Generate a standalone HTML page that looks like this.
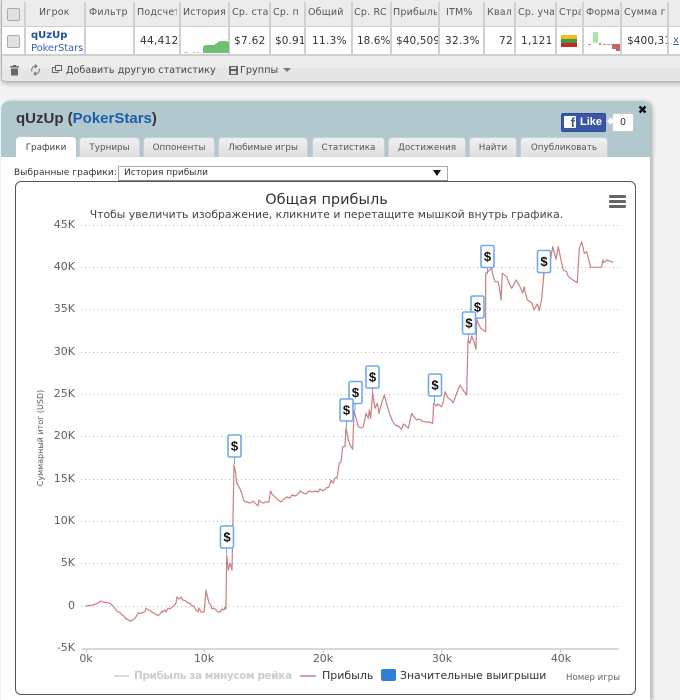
<!DOCTYPE html>
<html><head><meta charset="utf-8">
<style>
html,body{margin:0;padding:0;height:700px;overflow:hidden}
body{width:680px;position:relative;background:#f2f2f2;font-family:"DejaVu Sans",sans-serif;color:#333}
.a{position:absolute;white-space:nowrap}
.top{position:absolute;left:1px;top:0;width:690px;height:81px;background:#ececec;border:1px solid #b5b5b5;border-top:0;border-radius:0 0 5px 5px;box-shadow:0 2px 4px #bbb}
.c{position:absolute;top:2px;height:52px;border-right:2px solid #d0d0d0;box-sizing:border-box}
.h{position:absolute;top:7px;font-size:9.5px;color:#555;overflow:hidden;white-space:nowrap;letter-spacing:.2px}
.v{position:absolute;top:35px;font-size:10.5px;color:#333;overflow:hidden;white-space:nowrap;letter-spacing:.3px}
.cb{position:absolute;width:11px;height:11px;background:#e2e2e2;border:1px solid #aaa;border-radius:2px}
.panel{position:absolute;left:1px;top:101px;width:649px;height:599px;background:#fff;border-radius:8px 8px 0 0;box-shadow:3px 0 3px #bbb}
.phead{position:absolute;left:0;top:0;width:649px;height:56px;background:#b2c8cf;border-radius:8px 8px 0 0}
.tab{position:absolute;top:137px;height:20px;box-sizing:border-box;background:linear-gradient(#f0f0f0,#dedede);border:1px solid #c4d0d4;border-bottom:0;border-radius:4px 4px 0 0;font-size:8.8px;color:#555;text-align:center;line-height:20px}
.chart{position:absolute;left:15px;top:181px;width:621px;height:514px;box-sizing:border-box;background:#fff;border:1px solid #555;border-radius:6px}
.y{position:absolute;width:40px;left:35px;text-align:right;font-size:11px;color:#606060;line-height:12px}
.x{position:absolute;width:40px;text-align:center;font-size:11px;color:#606060;top:652px;line-height:13px}
</style></head><body>

<div class="top"></div>
<div class="a" style="left:2px;top:27px;width:680px;height:27px;background:#fff"></div>
<div class="a" style="left:2px;top:26px;width:680px;height:1px;background:#cfcfcf"></div>
<div class="a" style="left:2px;top:54px;width:680px;height:2px;background:#cfcfcf"></div>
<div class="a" style="left:2px;top:68px;width:680px;height:12px;background:#e6e6e6"></div>
<div class="c" style="left:24px;width:2px"></div>
<div class="c" style="left:84px;width:2px"></div>
<div class="c" style="left:133px;width:2px"></div>
<div class="c" style="left:179px;width:2px"></div>
<div class="c" style="left:228px;width:2px"></div>
<div class="c" style="left:269px;width:2px"></div>
<div class="c" style="left:304px;width:2px"></div>
<div class="c" style="left:351px;width:2px"></div>
<div class="c" style="left:390px;width:2px"></div>
<div class="c" style="left:438px;width:2px"></div>
<div class="c" style="left:483px;width:2px"></div>
<div class="c" style="left:514px;width:2px"></div>
<div class="c" style="left:555px;width:2px"></div>
<div class="c" style="left:582px;width:2px"></div>
<div class="c" style="left:620px;width:2px"></div>
<div class="c" style="left:667px;width:2px"></div>

<div class="cb" style="left:7px;top:8px"></div>
<div class="cb" style="left:7px;top:35px"></div>

<div class="h" style="left:39px;width:45px">Игрок</div>
<div class="h" style="left:89px;width:44px">Фильтр</div>
<div class="h" style="left:137px;width:40px">Подсчет</div>
<div class="h" style="left:183px;width:45px">История</div>
<div class="h" style="left:232px;width:36px">Ср. ста</div>
<div class="h" style="left:273px;width:30px">Ср. п</div>
<div class="h" style="left:308px;width:42px">Общий</div>
<div class="h" style="left:354px;width:36px">Ср. RC</div>
<div class="h" style="left:393px;width:44px">Прибыль</div>
<div class="h" style="left:446px;width:36px">ITM%</div>
<div class="h" style="left:487px;width:27px">Квал</div>
<div class="h" style="left:518px;width:36px">Ср. уча</div>
<div class="h" style="left:559px;width:22px">Стра</div>
<div class="h" style="left:586px;width:33px">Форма</div>
<div class="h" style="left:624px;width:42px">Сумма г</div>

<div class="a" style="left:31px;top:29px;font-size:10px;font-weight:bold;color:#1c4f9c;line-height:13px">qUzUp</div>
<div class="a" style="left:31px;top:42px;font-size:10px;color:#3a5fb0;line-height:13px;width:53px;overflow:hidden;letter-spacing:-.1px">PokerStars</div>
<div class="v" style="left:140px;width:38px;text-align:right">44,412</div>
<svg class="a" style="left:184px;top:40px" width="45" height="14"><path d="M0 12h4v1H0zM9 12h2v1H9zM12 12h3v1h-3zM19 12h1v1h-1z" fill="#a8dba8"/><path d="M19 13V7L21 5H30L36 1H41L45 2V13Z" fill="#6fc073"/></svg>
<div class="v" style="left:234px;width:34px">$7.62</div>
<div class="v" style="left:275px;width:29px;letter-spacing:.1px">$0.91</div>
<div class="v" style="left:312px;width:39px">11.3%</div>
<div class="v" style="left:357px;width:33px;letter-spacing:0">18.6%</div>
<div class="v" style="left:396px;width:42px;letter-spacing:.1px">$40,509</div>
<div class="v" style="left:445px;width:38px">32.3%</div>
<div class="v" style="left:486px;width:27px;text-align:right">72</div>
<div class="v" style="left:521px;width:33px">1,121</div>
<svg class="a" style="left:561px;top:35px" width="16" height="12"><rect width="16" height="4" y="0" fill="#e8c020"/><rect width="16" height="4" y="4" fill="#3f9a40"/><rect width="16" height="4" y="8" fill="#c8282a"/></svg>
<svg class="a" style="left:588px;top:30px" width="33" height="24"><rect x="5" y="2" width="5" height="11" fill="#a4e8a4"/><rect x="0" y="14" width="3" height="1" fill="#c88"/><rect x="11" y="13" width="2" height="2" fill="#c88"/><rect x="15" y="14" width="3" height="1" fill="#c88"/><rect x="19" y="14" width="3" height="1" fill="#c88"/><rect x="23" y="14" width="3" height="1" fill="#c88"/><rect x="24" y="14" width="4" height="5" fill="#c66"/><rect x="28" y="14" width="4" height="7" fill="#b66"/></svg>
<div class="v" style="left:627px;width:40px;letter-spacing:.1px">$400,31</div>
<div class="a" style="left:673px;top:35px;font-size:10px;color:#3a5fb0;text-decoration:underline">x</div>

<svg class="a" style="left:9px;top:64px" width="11" height="12"><path d="M1 2H10V3.500H1ZM4 1H7V2H4ZM2 4.500H9V11.500H2Z" fill="#666"/></svg>
<svg class="a" style="left:30px;top:64px" width="11" height="12" fill="none" stroke="#777" stroke-width="1"><path d="M2 7.500A3.800 3.800 0 0 1 6 2.200M9 4.500A3.800 3.800 0 0 1 5 9.800"/><path d="M5 .5L7 2.200 5 4M6 8L4 9.800 6 11.500" fill="#777"/></svg>
<svg class="a" style="left:52px;top:65px" width="10" height="10" fill="none" stroke="#666" stroke-width="1"><rect x="3.500" y=".5" width="6" height="5"/><path d="M3 2.500H.5V7.500H6V6"/></svg>
<div class="a" style="left:66px;top:64px;font-size:9.5px;color:#444;line-height:14px;letter-spacing:.1px">Добавить другую статистику</div>
<svg class="a" style="left:229px;top:66px" width="10" height="10"><path d="M0 0H9V9H0Z" fill="#666"/><rect x="2" y="1" width="5" height="2" fill="#ddd"/><rect x="2" y="5" width="5" height="3" fill="#ddd"/></svg>
<div class="a" style="left:240px;top:64px;font-size:9.7px;color:#444;line-height:14px">Группы</div>
<div class="a" style="left:283px;top:68px;width:0;height:0;border:4px solid transparent;border-top:4px solid #777;border-bottom:0"></div>

<div class="panel"><div class="phead"></div></div>
<div class="a" style="left:16px;top:110px;font:bold 15px/18px 'Liberation Sans',sans-serif;color:#333">qUzUp (<span style="color:#1c5ea8">PokerStars</span>)</div>

<div class="a" style="left:561px;top:113px;width:45px;height:19px;background:#3b57a3;border-radius:2px;box-sizing:border-box;border:1px solid #2e4a96"></div>
<div class="a" style="left:564px;top:116px;width:12px;height:12px;background:#fff;border-radius:1px;font:bold 13px/14px 'Liberation Sans',sans-serif;color:#3b57a3;text-align:right;overflow:hidden;padding-right:1px;box-sizing:border-box">f</div>
<div class="a" style="left:580px;top:115px;font:bold 11px/14px 'Liberation Sans',sans-serif;color:#fff">Like</div>
<div class="a" style="left:612px;top:113px;width:22px;height:19px;background:#fff;border:1px solid #c4c8d0;box-sizing:border-box;border-radius:2px;font-size:9.5px;line-height:17px;text-align:center;color:#333">0</div>
<div class="a" style="left:607px;top:118px;width:6px;height:6px;background:#fff;transform:rotate(45deg);border-left:1px solid #c4c8d0;border-bottom:1px solid #c4c8d0;box-sizing:border-box"></div>
<svg class="a" style="left:638px;top:105px" width="9" height="9"><path d="M1.500 1.500L7.500 7.500M7.500 1.500L1.500 7.500" stroke="#111" stroke-width="2.400"/></svg>

<div class="tab" style="left:16px;width:60px;background:#fff;color:#444;border-color:#fff">Графики</div>
<div class="tab" style="left:79px;width:61px">Турниры</div>
<div class="tab" style="left:143px;width:72px">Оппоненты</div>
<div class="tab" style="left:218px;width:90px">Любимые игры</div>
<div class="tab" style="left:312px;width:73px">Статистика</div>
<div class="tab" style="left:388px;width:78px">Достижения</div>
<div class="tab" style="left:469px;width:48px">Найти</div>
<div class="tab" style="left:520px;width:88px">Опубликовать</div>

<div class="a" style="left:14px;top:167px;font-size:9px;line-height:13px;color:#333;letter-spacing:.1px">Выбранные графики:</div>
<div class="a" style="left:118px;top:166px;width:330px;height:15px;box-sizing:border-box;border:1px solid #aaa;border-bottom-color:#888;background:#fff;font-size:9px;line-height:13px;color:#333;padding-left:5px">История прибыли</div>
<div class="a" style="left:433px;top:170px;width:0;height:0;border:4px solid transparent;border-top:6px solid #111;border-bottom:0"></div>

<div class="chart"></div>
<div class="a" style="left:16px;width:621px;top:191px;text-align:center;font-size:14.5px;line-height:18px;color:#333">Общая прибыль</div>
<div class="a" style="left:16px;width:621px;top:208px;text-align:center;font-size:10.85px;line-height:14px;color:#444">Чтобы увеличить изображение, кликните и перетащите мышкой внутрь графика.</div>
<div class="a" style="left:609px;top:195px;width:17px;height:3px;background:#666;border-radius:1px"></div>
<div class="a" style="left:609px;top:200px;width:17px;height:3px;background:#666;border-radius:1px"></div>
<div class="a" style="left:609px;top:205px;width:17px;height:3px;background:#666;border-radius:1px"></div>

<div class="y" style="top:219px">45K</div>
<div class="y" style="top:261px">40K</div>
<div class="y" style="top:303px">35K</div>
<div class="y" style="top:346px">30K</div>
<div class="y" style="top:388px">25K</div>
<div class="y" style="top:430px">20K</div>
<div class="y" style="top:473px">15K</div>
<div class="y" style="top:515px">10K</div>
<div class="y" style="top:557px">5K</div>
<div class="y" style="top:600px">0</div>
<div class="y" style="top:642px">-5K</div>
<div class="a" style="left:-19px;top:432px;width:120px;text-align:center;font-size:8px;line-height:12px;color:#555;transform:rotate(-90deg)">Суммарный итог (USD)</div>

<svg class="a" style="left:0;top:0" width="680" height="700">
<g stroke="#bbb" stroke-width="1" stroke-dasharray="1 3" fill="none">
<path d="M81 225.500H619M81 267.500H619M81 309.500H619M81 352.500H619M81 394.500H619M81 436.500H619M81 479.500H619M81 521.500H619M81 563.500H619M81 606.500H619"/>
</g>
<path d="M82 649H619" stroke="#d8d8d8" stroke-width="2"/>
<path d="M86.500 650v3M204.500 650v3M323.500 650v3M441.500 650v3M560.500 650v3" stroke="#c0d0e0"/>
<g stroke="#6aa8e8" stroke-width="1">
<path d="M234.500 457V464M226.500 548V554M346.500 421V427M355 404V410M372.500 388V394M434.500 396V403M468.500 334V341M477 318V322M487.500 268V274M543.500 273V279"/>
</g>
<path fill="none" stroke="#c98080" stroke-width="1.200" stroke-linejoin="round" d="M86 606L90 605.500L93 605L96 604L99 602.500L100.700 601L103 602L106 602.500L110 603.300L113 606L116 610L118 612L120 612.500L122 615L124 616L126 619L128 619.500L130 621L132 620.500L134 619L136 617L138 613L140 613.500L143 612.500L145 611.500L146 608L148 610L150 610.500L152 612L155 614L158 615.500L160 614L162 611L163 612L165 610L166 612L168 608L170 609L172 607L174 606L176 603L177 597L179 599L181 597L183 600L186 601L188 603L190 603L192 606L194 606L196 610L198 612L199 608L201 612L204 612L205 603L206 590L207.500 597L209 603L211 605L212 609L214 608L216 610L218 612L220 612L222 609L224 610L225 607L226 609L226.700 555L228.300 570L230 563.300L232 570L234 465L235.500 472L236.700 483L238 485L240 489L242 494L244 501L247 502L250 503L252 502L253 501L256 504L258 506L259 500L261 502L263 503L266 502L269 502L270.500 491L272 494L275 497L278 500L281 502L284 499L287 497L290 498L292 495L295 496L298 494L300 491L303 493L306 494L309 491L312 492L315 491L318 492L320 489L323 491L326 488L329 487L331 480L333 483L335 478L337 478L339.300 463L341 462L342.700 446.700L345 446.700L346 427.300L348.300 440L350 445L352.700 449.300L354 410L356 418L358.300 426.700L361 428L363.300 426.700L366 413.300L368.300 418.300L369.300 410L370.700 418.300L372.700 393.300L375 408.300L377.300 403.300L379 413.300L382 402L384.300 395L387 405L390 415L392 420L395 425L398 426L401.700 429.300L403.300 424L406 426L408.300 428.300L411.700 413.300L414 417L416.700 420L419 419L421.700 420.700L425 422L429 422L432.700 423.300L433.700 403.300L436.700 406L438 404L441.300 406.700L443.300 401.700L445 391.700L448.300 398.300L451 400L453.300 402.700L456 395L460 385L463 390L466.700 395L468 340L470 343.300L471.700 336L474 341.700L476 349.300L476.700 320L480.700 328.300L483.300 330L485.700 331.700L485.700 273.300L491.700 268.300L493 276L495 281.700L498.300 281.700L500 292L501 300L502.300 273.300L506.700 276.700L509 283L511.700 288.300L514 284L516 280L518 283L520 286.700L522.700 293.300L524 286.700L527.300 300L531.700 302.700L534 310L537.300 304L539.300 310.700L541.700 298.300L544 273.300L547 270L550 263.300L552.700 246.700L556 259.300L558.300 246.700L561 260L563.300 270L566.700 271.700L568.300 276.700L573 280L577.300 282.700L579.300 248.300L581.700 241.700L584.300 253.300L586.700 251.700L590.700 267.300L601.700 267.300L602.700 260L604 262.700L606.700 260L613.300 262.300"/>
<g fill="#fff" stroke="#6fa9ea" stroke-width="1.600">
<rect x="228" y="435" width="13" height="22" rx="1.500"/>
<rect x="220.500" y="526" width="13" height="22" rx="1.500"/>
<rect x="349" y="381.500" width="13" height="22" rx="1.500"/>
<rect x="340" y="399" width="13" height="22" rx="1.500"/>
<rect x="366" y="366" width="13" height="22" rx="1.500"/>
<rect x="428.500" y="374" width="13" height="22" rx="1.500"/>
<rect x="471" y="296" width="13" height="22" rx="1.500"/>
<rect x="462.500" y="312" width="13" height="22" rx="1.500"/>
<rect x="481" y="245.500" width="13" height="22" rx="1.500"/>
<rect x="537.500" y="250.500" width="13" height="22" rx="1.500"/>
</g>
<g font-family="'Liberation Sans',sans-serif" font-size="13" font-weight="bold" fill="#111" text-anchor="middle">
<text x="234.500" y="450.500">$</text>
<text x="227" y="541.500">$</text>
<text x="355.500" y="397">$</text>
<text x="346.500" y="414.500">$</text>
<text x="372.500" y="381.500">$</text>
<text x="435" y="389.500">$</text>
<text x="477.500" y="311.500">$</text>
<text x="469" y="327.500">$</text>
<text x="487.500" y="261">$</text>
<text x="544" y="266">$</text>
</g>
<path d="M114 676H129" stroke="#ccc" stroke-width="1.500"/>
<path d="M300 676H316" stroke="#c98080" stroke-width="1.500"/>
<rect x="381" y="669" width="15" height="12" rx="2" fill="#2f7ed8"/>
</svg>

<div class="x" style="left:66px">0k</div>
<div class="x" style="left:184px">10k</div>
<div class="x" style="left:303px">20k</div>
<div class="x" style="left:422px">30k</div>
<div class="x" style="left:541px">40k</div>

<div class="a" style="left:134px;top:669px;font-size:10.5px;line-height:14px;color:#ccc;font-weight:bold;letter-spacing:-.4px">Прибыль за минусом рейка</div>
<div class="a" style="left:322px;top:669px;font-size:11px;line-height:14px;color:#333">Прибыль</div>
<div class="a" style="left:400px;top:669px;font-size:10.85px;line-height:14px;color:#333">Значительные выигрыши</div>
<div class="a" style="left:566px;top:672px;font-size:8.6px;line-height:12px;color:#666">Номер игры</div>
</body></html>
